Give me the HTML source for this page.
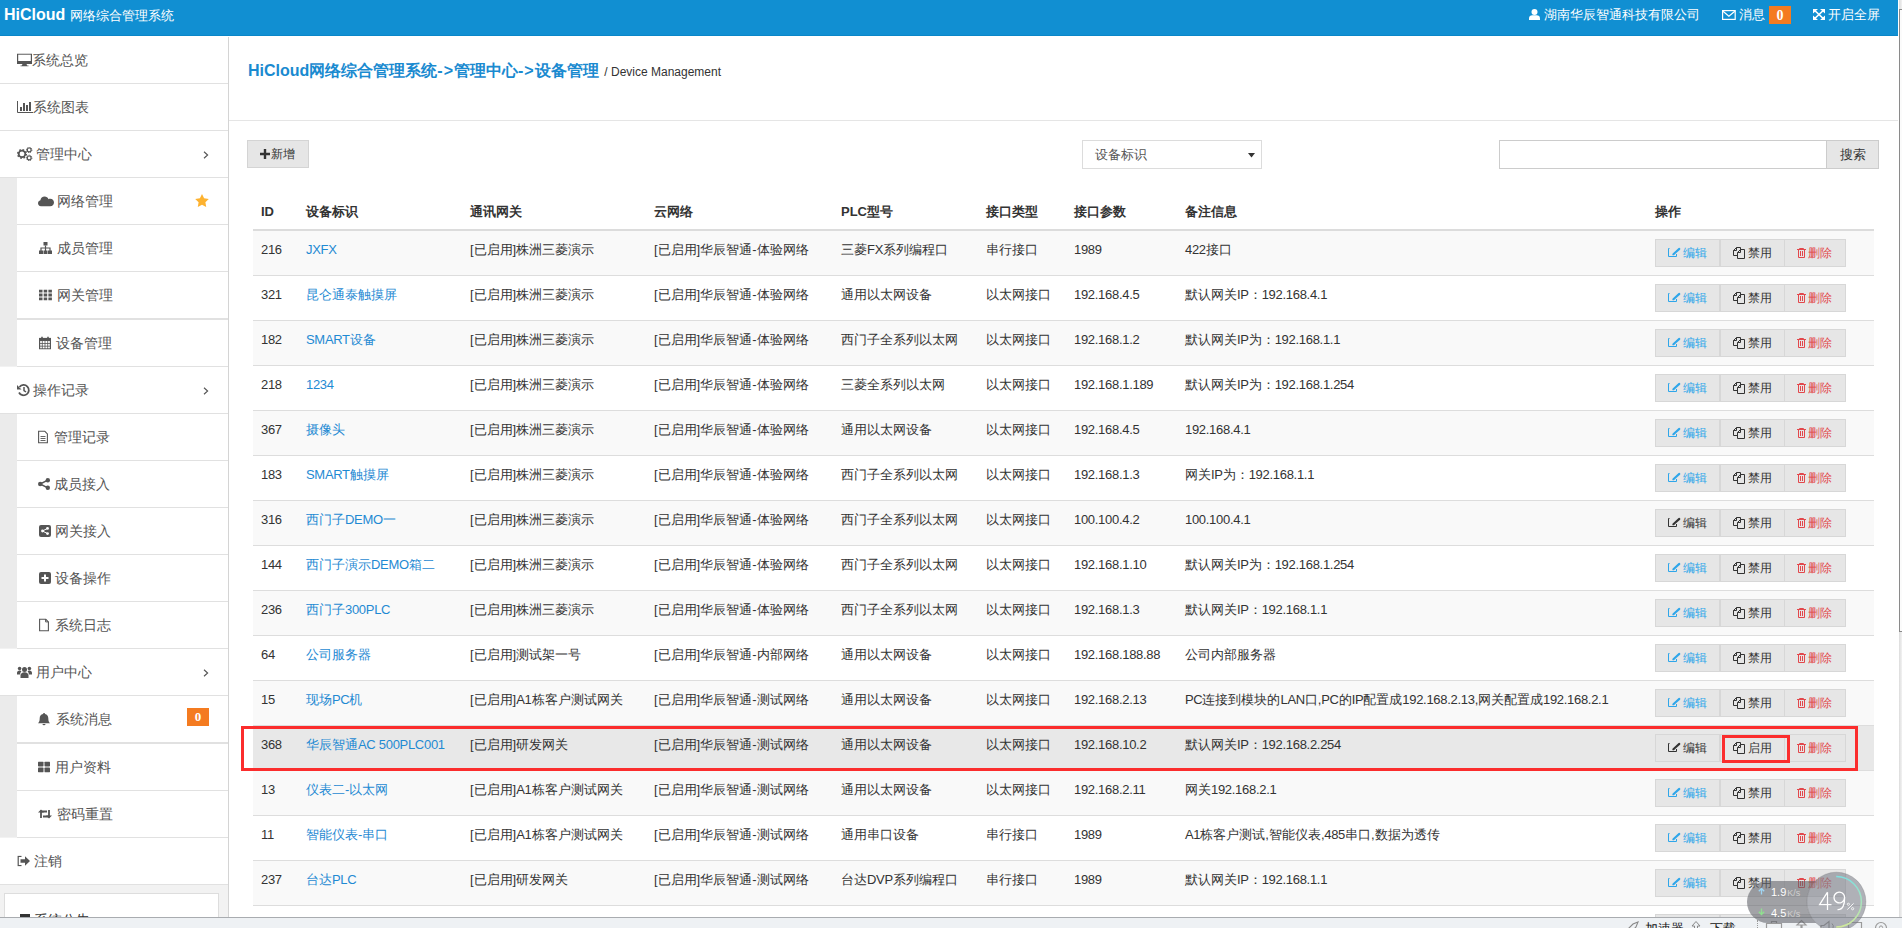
<!DOCTYPE html>
<html><head><meta charset="utf-8">
<style>
*{margin:0;padding:0;box-sizing:border-box}
html,body{width:1902px;height:928px;overflow:hidden;background:#fff;font-family:"Liberation Sans",sans-serif;font-size:13px;color:#333}
svg{display:inline-block;vertical-align:middle}
#hdr{position:absolute;left:0;top:0;width:1898px;height:36px;background:#118fd2;border-bottom:1px solid #0a86c8;color:#fff}
#logo{position:absolute;left:4px;top:5px;font-size:16px;line-height:20px;font-weight:bold;white-space:nowrap}
#logo span{font-weight:normal;font-size:13px}
.hi{position:absolute;top:0;height:36px;line-height:29px;font-size:13px;white-space:nowrap}
.hbadge{position:absolute;left:1769px;top:6px;width:22px;height:18px;background:#f47b20;color:#fff;font-family:"Liberation Serif",serif;font-weight:bold;font-size:14px;line-height:19px;text-align:center}
#sbbg{position:absolute;left:0;top:37px;width:229px;height:880px;background:#f2f2f2;border-right:1px solid #d4d4d4}
.mi{position:absolute;background:#fff;border-bottom:1px solid #e1e1e1;font-size:14px;color:#555}
.mgray{position:absolute;left:0;width:17px;background:#ebebeb}
.mic{position:absolute;top:50%;transform:translateY(-50%);line-height:0}
.mt{position:absolute;top:13px;line-height:20px;white-space:nowrap}
.chev{position:absolute;left:203px;top:20px;line-height:0}
.star{position:absolute;left:178px;top:16px;line-height:0}
.sbadge{position:absolute;left:170px;top:12px;width:22px;height:18px;background:#f47b20;color:#fff;font-family:"Liberation Serif",serif;font-weight:bold;font-size:13px;line-height:17px;text-align:center}
#notice{position:absolute;left:4px;top:893px;width:215px;height:40px;background:#fff;border:1px solid #ddd}
#main{position:absolute;left:229px;top:37px;width:1669px;height:880px;background:#fff}
#title{position:absolute;left:248px;top:60px;white-space:nowrap;line-height:22px}
#title b{font-size:16px;color:#1a8ad0}
#title i{font-style:normal;letter-spacing:1px}
#title small{font-size:12px;color:#333;font-weight:normal;margin-left:2px}
#tline{position:absolute;left:229px;top:120px;width:1669px;height:1px;background:#e5e5e5}
.btn{position:absolute;background:#e6e6e6;border:1px solid #d4d4d4;color:#333;font-size:13px;white-space:nowrap}
#sel{position:absolute;left:1082px;top:140px;width:180px;height:29px;border:1px solid #dcdcdc;background:#fff;font-size:13px;color:#555}
#srch{position:absolute;left:1499px;top:140px;width:328px;height:29px;border:1px solid #ccc;background:#fff}
table{position:absolute;left:253px;top:192px;width:1621px;border-collapse:collapse;table-layout:fixed}
th{font-weight:bold;text-align:left;height:38px;padding:2px 8px 0 8px;border-bottom:2px solid #dcdcdc;font-size:13px;color:#333;vertical-align:middle;white-space:nowrap}
td{height:45px;padding:0 8px 6px 8px;border-bottom:1px solid #dddddd;font-size:13px;color:#333;vertical-align:middle;white-space:nowrap}
tr.st td{background:#f9f9f9}
tr.hv td{background:#e8e8e8}
td.lk{color:#1f8ad3}
td.op{padding:0 8px}
.l{letter-spacing:-0.3px}
.bg{position:relative;height:28px;width:190px;margin-left:0}
.bt{position:absolute;top:0;height:28px;background:#e6e6e6;border:1px solid #d7d7d7;font-size:12px;line-height:26px;color:#333;white-space:nowrap;padding-left:12px}
.bt svg.bi{position:absolute}
.bt i{position:absolute;top:0;font-style:normal;line-height:26px}
.b1{left:0;width:65px}
.b2{left:65px;width:65px}
.b3{left:129px;width:62px;color:#e2474b}
#scroll{position:absolute;left:1899px;top:0;width:3px;height:917px;background:linear-gradient(90deg,#dcdcdc,#f2f2f2)}
#thumb{position:absolute;left:1899px;top:9px;width:3px;height:623px;border-left:1px solid #8a8a8a;border-top:1px solid #8a8a8a;border-bottom:1px solid #8a8a8a;background:#fbfbfb}
#status{position:absolute;left:0;top:917px;width:1902px;height:11px;background:#eef1f4;border-top:1px solid #a9acb0}
#pill{position:absolute;left:1747px;top:881px;width:90px;height:42px;border-radius:21px;background:rgba(100,102,108,0.6)}
#circ{position:absolute;left:1807px;top:872px;width:59px;height:59px;border-radius:30px;background:rgba(125,128,138,0.6);box-shadow:inset 0 0 0 1px rgba(90,90,95,0.25)}
#redbox{position:absolute;left:241px;top:726px;width:1617px;height:45px;border:3px solid #fb2d2d}
#redbox2{position:absolute;left:1722px;top:735px;width:68px;height:28px;border:3px solid #fb2d2d}
</style></head><body>
<div id="hdr"></div>
<div id="logo" style="color:#fff">HiCloud <span>网络综合管理系统</span></div>
<div class="hi" style="left:1529px;color:#fff"><svg width="11" height="11" viewBox="0 0 11 11" style="vertical-align:-1px"><circle cx="5.5" cy="3" r="3" fill="#fff"/><path d="M0 11V9.5C0 7.5 1.5 6.3 3.2 6.3h4.6C9.5 6.3 11 7.5 11 9.5V11z" fill="#fff"/></svg> 湖南华辰智通科技有限公司</div>
<div class="hi" style="left:1722px;color:#fff"><svg width="14" height="10" viewBox="0 0 14 10" style="position:absolute;left:0;top:10px"><rect x="0.6" y="0.6" width="12.6" height="8.8" fill="none" stroke="#fff" stroke-width="1.2"/><path d="M1 1.3L6.9 6.3 12.8 1.3" fill="none" stroke="#fff" stroke-width="1.2"/></svg><span style="position:absolute;left:17px;top:0">消息</span></div>
<div class="hbadge">0</div>
<div class="hi" style="left:1813px;color:#fff"><svg width="12" height="11" viewBox="0 0 12 11" style="position:absolute;left:0;top:9px"><path d="M0 0H5L0 4.5Z M12 0H7L12 4.5Z M0 11H5L0 6.5Z M12 11H7L12 6.5Z" fill="#fff"/><path d="M1.2 1L10.8 10M10.8 1L1.2 10" stroke="#fff" stroke-width="1.7"/></svg><span style="position:absolute;left:15px;top:0">开启全屏</span></div>
<div id="sbbg"></div><div class="mgray" style="top:178px;height:188px"></div><div class="mgray" style="top:414px;height:234px"></div><div class="mgray" style="top:696px;height:141px"></div>
<div class="mi" style="top:37px;left:0px;width:228px;height:47px;border-bottom-width:1px"><span class="mic" style="left:17px"><svg class="ic" width="15" height="13" viewBox="0 0 15 13" style=""><rect x="0.6" y="0.6" width="13.8" height="9.3" fill="none" stroke="#555" stroke-width="1.2"/><rect x="0" y="7.5" width="15" height="2.7" fill="#555"/><path d="M5.5 10h4l0.5 2h1.5v1h-8v-1h1.5z" fill="#555"/></svg></span><span class="mt" style="left:32px">系统总览</span></div>
<div class="mi" style="top:84px;left:0px;width:228px;height:47px;border-bottom-width:1px"><span class="mic" style="left:17px"><svg class="ic" width="16" height="12" viewBox="0 0 16 12" style=""><path d="M0.5 0V11.5H16" fill="none" stroke="#555" stroke-width="1"/><rect x="3" y="6" width="2" height="4" fill="#555"/><rect x="6" y="2" width="2" height="8" fill="#555"/><rect x="9" y="4" width="2" height="6" fill="#555"/><rect x="12" y="1" width="2" height="9" fill="#555"/></svg></span><span class="mt" style="left:33px">系统图表</span></div>
<div class="mi" style="top:131px;left:0px;width:228px;height:47px;border-bottom-width:1px"><span class="mic" style="left:17px"><svg class="ic" width="16" height="14" viewBox="0 0 16 14" style=""><circle cx="5" cy="6.9" r="3.3" fill="none" stroke="#555" stroke-width="1.8"/><circle cx="5" cy="6.9" r="4.4" fill="none" stroke="#555" stroke-width="1.3" stroke-dasharray="1.7 1.75"/><circle cx="12.2" cy="2.9" r="1.9" fill="none" stroke="#555" stroke-width="1.2"/><circle cx="12.2" cy="2.9" r="2.7" fill="none" stroke="#555" stroke-width="1" stroke-dasharray="1.1 1.0"/><circle cx="12.2" cy="10.9" r="1.9" fill="none" stroke="#555" stroke-width="1.2"/><circle cx="12.2" cy="10.9" r="2.7" fill="none" stroke="#555" stroke-width="1" stroke-dasharray="1.1 1.0"/></svg></span><span class="mt" style="left:36px">管理中心</span><span class="chev"><svg class="ic" width="6" height="8" viewBox="0 0 6 8" style=""><path d="M1 0.8l3.6 3.2-3.6 3.2" fill="none" stroke="#555" stroke-width="1.15"/></svg></span></div>
<div class="mi" style="top:178px;left:17px;width:211px;height:47px;border-bottom-width:1px"><span class="mic" style="left:21px"><svg class="ic" width="16" height="11" viewBox="0 0 16 11" style=""><path d="M3.5 11C1.5 11 0 9.6 0 7.8 0 6.3 1 5.1 2.4 4.8 2.6 2.7 4.4 1 6.6 1c1.8 0 3.3 1.1 3.9 2.7C11 3.4 11.6 3.3 12.2 3.3c2.1 0 3.8 1.7 3.8 3.8S14.3 11 12.2 11z" fill="#555"/></svg></span><span class="mt" style="left:40px">网络管理</span><span class="star"><svg class="ic" width="14" height="13" viewBox="0 0 14 13" style=""><path d="M7 0l2.1 4.3 4.7 0.7-3.4 3.3 0.8 4.7L7 10.8 2.8 13l0.8-4.7L0.2 5l4.7-0.7z" fill="#fdb230"/></svg></span></div>
<div class="mi" style="top:225px;left:17px;width:211px;height:47px;border-bottom-width:1px"><span class="mic" style="left:22px"><svg class="ic" width="13" height="12" viewBox="0 0 13 12" style=""><rect x="4.5" y="0" width="4" height="3.5" fill="#555"/><path d="M6.5 3.5v2.5M2 9V6h9v3M6.5 6v3" fill="none" stroke="#555" stroke-width="1.2"/><rect x="0" y="8.5" width="4" height="3.5" fill="#555"/><rect x="4.5" y="8.5" width="4" height="3.5" fill="#555"/><rect x="9" y="8.5" width="4" height="3.5" fill="#555"/></svg></span><span class="mt" style="left:40px">成员管理</span></div>
<div class="mi" style="top:272px;left:17px;width:211px;height:48px;border-bottom-width:2px"><span class="mic" style="left:22px"><svg class="ic" width="13" height="11" viewBox="0 0 13 11" style=""><rect x="0" y="0" width="3.5" height="3" fill="#555"/><rect x="0" y="4" width="3.5" height="3" fill="#555"/><rect x="0" y="8" width="3.5" height="3" fill="#555"/><rect x="4.7" y="0" width="3.5" height="3" fill="#555"/><rect x="4.7" y="4" width="3.5" height="3" fill="#555"/><rect x="4.7" y="8" width="3.5" height="3" fill="#555"/><rect x="9.4" y="0" width="3.5" height="3" fill="#555"/><rect x="9.4" y="4" width="3.5" height="3" fill="#555"/><rect x="9.4" y="8" width="3.5" height="3" fill="#555"/></svg></span><span class="mt" style="left:40px">网关管理</span></div>
<div class="mi" style="top:320px;left:17px;width:211px;height:47px;border-bottom-width:1px"><span class="mic" style="left:22px"><svg class="ic" width="12" height="13" viewBox="0 0 12 13" style=""><rect x="0.6" y="2" width="10.8" height="10.4" fill="none" stroke="#555" stroke-width="1.2"/><rect x="0.6" y="2" width="10.8" height="2.5" fill="#555"/><path d="M3 0v3M9 0v3" stroke="#555" stroke-width="1.6"/><path d="M0.6 7h10.8M0.6 9.7h10.8M3.3 4.5v8M6 4.5v8M8.7 4.5v8" stroke="#555" stroke-width="0.8"/></svg></span><span class="mt" style="left:39px">设备管理</span></div>
<div class="mi" style="top:367px;left:0px;width:228px;height:47px;border-bottom-width:1px"><span class="mic" style="left:17px"><svg class="ic" width="13" height="13" viewBox="0 0 13 13" style=""><path d="M2.5 3.5A5.2 5.2 0 1 1 2 9" fill="none" stroke="#555" stroke-width="1.8"/><path d="M0 1.5l0 4.5 4.5 0z" fill="#555"/><path d="M7 3.5v3.5l2 1.5" fill="none" stroke="#555" stroke-width="1.5"/></svg></span><span class="mt" style="left:33px">操作记录</span><span class="chev"><svg class="ic" width="6" height="8" viewBox="0 0 6 8" style=""><path d="M1 0.8l3.6 3.2-3.6 3.2" fill="none" stroke="#555" stroke-width="1.15"/></svg></span></div>
<div class="mi" style="top:414px;left:17px;width:211px;height:47px;border-bottom-width:1px"><span class="mic" style="left:21px"><svg class="ic" width="10" height="13" viewBox="0 0 10 13" style=""><path d="M0.6 0.6h6l2.8 2.8v9H0.6z" fill="none" stroke="#555" stroke-width="1.1"/><path d="M2.5 6h5M2.5 8h5M2.5 10h5" stroke="#555" stroke-width="0.9"/></svg></span><span class="mt" style="left:37px">管理记录</span></div>
<div class="mi" style="top:461px;left:17px;width:211px;height:47px;border-bottom-width:1px"><span class="mic" style="left:21px"><svg class="ic" width="12" height="12" viewBox="0 0 12 12" style=""><circle cx="2.2" cy="6" r="2.2" fill="#555"/><circle cx="9.8" cy="2.2" r="2.2" fill="#555"/><circle cx="9.8" cy="9.8" r="2.2" fill="#555"/><path d="M2.2 6L9.8 2.2M2.2 6l7.6 3.8" stroke="#555" stroke-width="1.4"/></svg></span><span class="mt" style="left:37px">成员接入</span></div>
<div class="mi" style="top:508px;left:17px;width:211px;height:47px;border-bottom-width:1px"><span class="mic" style="left:22px"><svg class="ic" width="12" height="12" viewBox="0 0 12 12" style=""><rect x="0" y="0" width="12" height="12" rx="2" fill="#555"/><circle cx="3.5" cy="6" r="1.4" fill="#fff"/><circle cx="8.5" cy="3.4" r="1.4" fill="#fff"/><circle cx="8.5" cy="8.6" r="1.4" fill="#fff"/><path d="M3.5 6l5-2.6M3.5 6l5 2.6" stroke="#fff" stroke-width="1"/></svg></span><span class="mt" style="left:38px">网关接入</span></div>
<div class="mi" style="top:555px;left:17px;width:211px;height:47px;border-bottom-width:1px"><span class="mic" style="left:22px"><svg class="ic" width="12" height="12" viewBox="0 0 12 12" style=""><rect x="0" y="0" width="12" height="12" rx="2" fill="#555"/><path d="M6 2.5v7M2.5 6h7" stroke="#fff" stroke-width="2"/></svg></span><span class="mt" style="left:38px">设备操作</span></div>
<div class="mi" style="top:602px;left:17px;width:211px;height:47px;border-bottom-width:1px"><span class="mic" style="left:22px"><svg class="ic" width="10" height="13" viewBox="0 0 10 13" style=""><path d="M0.6 0.6h6l2.8 2.8v9H0.6z" fill="none" stroke="#555" stroke-width="1.1"/><path d="M6.6 0.6v2.8h2.8" fill="none" stroke="#555" stroke-width="1"/></svg></span><span class="mt" style="left:38px">系统日志</span></div>
<div class="mi" style="top:649px;left:0px;width:228px;height:47px;border-bottom-width:1px"><span class="mic" style="left:17px"><svg class="ic" width="15" height="12" viewBox="0 0 15 12" style=""><circle cx="7.5" cy="3.5" r="2.5" fill="#555"/><path d="M3.5 12v-2.5c0-2 1.5-3.3 4-3.3s4 1.3 4 3.3V12z" fill="#555"/><circle cx="2.6" cy="2.5" r="1.8" fill="#555"/><circle cx="12.4" cy="2.5" r="1.8" fill="#555"/><path d="M0 8.5V7c0-1.5 1-2.5 2.6-2.5 1 0 1.5 0.4 1.8 0.8-0.8 0.8-1.2 1.8-1.2 3.2z M15 8.5V7c0-1.5-1-2.5-2.6-2.5-1 0-1.5 0.4-1.8 0.8 0.8 0.8 1.2 1.8 1.2 3.2z" fill="#555"/></svg></span><span class="mt" style="left:36px">用户中心</span><span class="chev"><svg class="ic" width="6" height="8" viewBox="0 0 6 8" style=""><path d="M1 0.8l3.6 3.2-3.6 3.2" fill="none" stroke="#555" stroke-width="1.15"/></svg></span></div>
<div class="mi" style="top:696px;left:17px;width:211px;height:48px;border-bottom-width:2px"><span class="mic" style="left:21px"><svg class="ic" width="12" height="13" viewBox="0 0 12 13" style=""><path d="M6 0.5c0.6 0 1 0.4 1 0.9 2.2 0.4 3.3 2.2 3.3 4.3 0 3 0.8 4.2 1.7 5H0c0.9-0.8 1.7-2 1.7-5 0-2.1 1.1-3.9 3.3-4.3 0-0.5 0.4-0.9 1-0.9z M4.5 11.6h3c0 0.8-0.7 1.4-1.5 1.4s-1.5-0.6-1.5-1.4z" fill="#555"/></svg></span><span class="mt" style="left:39px">系统消息</span><span class="sbadge">0</span></div>
<div class="mi" style="top:744px;left:17px;width:211px;height:47px;border-bottom-width:1px"><span class="mic" style="left:21px"><svg class="ic" width="12" height="11" viewBox="0 0 12 11" style=""><rect x="0" y="0" width="5.5" height="5" rx="0.8" fill="#555"/><rect x="6.5" y="0" width="5.5" height="5" rx="0.8" fill="#555"/><rect x="0" y="6" width="5.5" height="5" rx="0.8" fill="#555"/><rect x="6.5" y="6" width="5.5" height="5" rx="0.8" fill="#555"/></svg></span><span class="mt" style="left:38px">用户资料</span></div>
<div class="mi" style="top:791px;left:17px;width:211px;height:47px;border-bottom-width:1px"><span class="mic" style="left:21px"><svg class="ic" width="14" height="10" viewBox="0 0 14 10" style=""><path d="M3 9V2.5h6" fill="none" stroke="#555" stroke-width="1.8"/><path d="M0 3.5L3 0.5 6 3.5z" fill="#555"/><path d="M11 1v6.5H5" fill="none" stroke="#555" stroke-width="1.8"/><path d="M8 6.5l3 3 3-3z" fill="#555"/></svg></span><span class="mt" style="left:40px">密码重置</span></div>
<div class="mi" style="top:838px;left:0px;width:228px;height:47px;border-bottom-width:1px"><span class="mic" style="left:17px"><svg class="ic" width="13" height="11" viewBox="0 0 13 11" style=""><path d="M4.5 0.8H1.2v9.4h3.3" fill="none" stroke="#555" stroke-width="1.2"/><path d="M3.5 3.8h4.5V0.8L13 5.5 8 10.2V7.2H3.5z" fill="#555"/></svg></span><span class="mt" style="left:34px">注销</span></div>
<div id="notice"></div>
<div style="position:absolute;left:20px;top:914px;width:10px;height:3px;background:#333;overflow:hidden"></div>
<div style="position:absolute;left:34px;top:910px;height:7px;overflow:hidden;font-size:14px;line-height:20px;color:#333;white-space:nowrap">系统公告</div>
<div id="main"></div>
<div id="title"><b>HiCloud网络综合管理系统<i>-&gt;</i>管理中心<i>-&gt;</i>设备管理</b> <small>/ Device Management</small></div>
<div id="tline"></div>
<div class="btn" style="left:247px;top:140px;width:62px;height:28px"><svg width="10" height="10" viewBox="0 0 10 10" style="position:absolute;left:12px;top:8px"><path d="M5 0v10M0 5h10" stroke="#333" stroke-width="2.4"/></svg><span style="position:absolute;left:23px;top:0;font-size:12px;line-height:26px">新增</span></div>
<div id="sel"><span style="position:absolute;left:12px;top:5px;line-height:18px">设备标识</span><svg width="7" height="5" viewBox="0 0 7 5" style="position:absolute;left:165px;top:12px"><path d="M0 0h7L3.5 4.5z" fill="#333"/></svg></div>
<div id="srch"></div>
<div class="btn" style="left:1826px;top:140px;width:53px;height:29px;border-color:#ccc;line-height:27px;text-align:center;color:#333">搜索</div>
<table>
<colgroup><col style="width:45px"><col style="width:164px"><col style="width:184px"><col style="width:187px"><col style="width:145px"><col style="width:88px"><col style="width:111px"><col style="width:470px"><col style="width:227px"></colgroup>
<thead><tr><th>ID</th><th>设备标识</th><th>通讯网关</th><th>云网络</th><th>PLC型号</th><th>接口类型</th><th>接口参数</th><th>备注信息</th><th>操作</th></tr></thead>
<tbody>
<tr class="st"><td><span class="l">216</span></td><td class="lk"><span class="l">JXFX</span></td><td>[已启用]株洲三菱演示</td><td>[已启用]华辰智通-体验网络</td><td>三菱<span class="l">FX</span>系列编程口</td><td>串行接口</td><td><span class="l">1989</span></td><td><span class="l">422</span>接口</td><td class="op"><div class="bg"><span class="bt b1" style="color:#2ea6ea"><svg class="bi" width="18" height="18" viewBox="0 0 18 18" style="left:9px;top:3px"><path d="M4.5 5.5H3.5V13.5H11.5V11" fill="none" stroke="#2ea6ea" stroke-width="1"/><path d="M8.4 11.2L14.3 5.9" fill="none" stroke="#2ea6ea" stroke-width="2.1" stroke-linecap="round"/><path d="M7.6 12.2L8.2 10.4 9.5 11.6Z" fill="#2ea6ea"/></svg><i style="left:27px">编辑</i></span><span class="bt b2"><svg class="bi" width="18" height="18" viewBox="0 0 18 18" style="left:9px;top:3px"><path d="M6.5 4.5H10.5V12.5H3.5V7.5Z M3.5 7.5H6.5V4.5" fill="none" stroke="#333" stroke-width="1"/><path d="M10.5 6.5H14.5V15.5H7.5V9.5Z" fill="#e6e6e6" stroke="#333" stroke-width="1"/><path d="M7.5 9.5H10.5V6.5" fill="none" stroke="#333" stroke-width="1"/></svg><i style="left:27px">禁用</i></span><span class="bt b3"><svg class="bi" width="18" height="18" viewBox="0 0 18 18" style="left:8px;top:3px"><path d="M4 6.5H13" fill="none" stroke="#e2474b" stroke-width="1"/><path d="M6.5 6V5.5H10.5V6" fill="none" stroke="#e2474b" stroke-width="1"/><path d="M5.5 6.5V14.5H11.5V6.5" fill="none" stroke="#e2474b" stroke-width="1"/><path d="M7.5 8V13M9.5 8V13" fill="none" stroke="#e2474b" stroke-width="1"/></svg><i style="left:23px">删除</i></span></div></td></tr>
<tr class=""><td><span class="l">321</span></td><td class="lk">昆仑通泰触摸屏</td><td>[已启用]株洲三菱演示</td><td>[已启用]华辰智通-体验网络</td><td>通用以太网设备</td><td>以太网接口</td><td><span class="l">192.168.4.5</span></td><td>默认网关<span class="l">IP</span>：<span class="l">192.168.4.1</span></td><td class="op"><div class="bg"><span class="bt b1" style="color:#2ea6ea"><svg class="bi" width="18" height="18" viewBox="0 0 18 18" style="left:9px;top:3px"><path d="M4.5 5.5H3.5V13.5H11.5V11" fill="none" stroke="#2ea6ea" stroke-width="1"/><path d="M8.4 11.2L14.3 5.9" fill="none" stroke="#2ea6ea" stroke-width="2.1" stroke-linecap="round"/><path d="M7.6 12.2L8.2 10.4 9.5 11.6Z" fill="#2ea6ea"/></svg><i style="left:27px">编辑</i></span><span class="bt b2"><svg class="bi" width="18" height="18" viewBox="0 0 18 18" style="left:9px;top:3px"><path d="M6.5 4.5H10.5V12.5H3.5V7.5Z M3.5 7.5H6.5V4.5" fill="none" stroke="#333" stroke-width="1"/><path d="M10.5 6.5H14.5V15.5H7.5V9.5Z" fill="#e6e6e6" stroke="#333" stroke-width="1"/><path d="M7.5 9.5H10.5V6.5" fill="none" stroke="#333" stroke-width="1"/></svg><i style="left:27px">禁用</i></span><span class="bt b3"><svg class="bi" width="18" height="18" viewBox="0 0 18 18" style="left:8px;top:3px"><path d="M4 6.5H13" fill="none" stroke="#e2474b" stroke-width="1"/><path d="M6.5 6V5.5H10.5V6" fill="none" stroke="#e2474b" stroke-width="1"/><path d="M5.5 6.5V14.5H11.5V6.5" fill="none" stroke="#e2474b" stroke-width="1"/><path d="M7.5 8V13M9.5 8V13" fill="none" stroke="#e2474b" stroke-width="1"/></svg><i style="left:23px">删除</i></span></div></td></tr>
<tr class="st"><td><span class="l">182</span></td><td class="lk"><span class="l">SMART</span>设备</td><td>[已启用]株洲三菱演示</td><td>[已启用]华辰智通-体验网络</td><td>西门子全系列以太网</td><td>以太网接口</td><td><span class="l">192.168.1.2</span></td><td>默认网关<span class="l">IP</span>为：<span class="l">192.168.1.1</span></td><td class="op"><div class="bg"><span class="bt b1" style="color:#2ea6ea"><svg class="bi" width="18" height="18" viewBox="0 0 18 18" style="left:9px;top:3px"><path d="M4.5 5.5H3.5V13.5H11.5V11" fill="none" stroke="#2ea6ea" stroke-width="1"/><path d="M8.4 11.2L14.3 5.9" fill="none" stroke="#2ea6ea" stroke-width="2.1" stroke-linecap="round"/><path d="M7.6 12.2L8.2 10.4 9.5 11.6Z" fill="#2ea6ea"/></svg><i style="left:27px">编辑</i></span><span class="bt b2"><svg class="bi" width="18" height="18" viewBox="0 0 18 18" style="left:9px;top:3px"><path d="M6.5 4.5H10.5V12.5H3.5V7.5Z M3.5 7.5H6.5V4.5" fill="none" stroke="#333" stroke-width="1"/><path d="M10.5 6.5H14.5V15.5H7.5V9.5Z" fill="#e6e6e6" stroke="#333" stroke-width="1"/><path d="M7.5 9.5H10.5V6.5" fill="none" stroke="#333" stroke-width="1"/></svg><i style="left:27px">禁用</i></span><span class="bt b3"><svg class="bi" width="18" height="18" viewBox="0 0 18 18" style="left:8px;top:3px"><path d="M4 6.5H13" fill="none" stroke="#e2474b" stroke-width="1"/><path d="M6.5 6V5.5H10.5V6" fill="none" stroke="#e2474b" stroke-width="1"/><path d="M5.5 6.5V14.5H11.5V6.5" fill="none" stroke="#e2474b" stroke-width="1"/><path d="M7.5 8V13M9.5 8V13" fill="none" stroke="#e2474b" stroke-width="1"/></svg><i style="left:23px">删除</i></span></div></td></tr>
<tr class=""><td><span class="l">218</span></td><td class="lk"><span class="l">1234</span></td><td>[已启用]株洲三菱演示</td><td>[已启用]华辰智通-体验网络</td><td>三菱全系列以太网</td><td>以太网接口</td><td><span class="l">192.168.1.189</span></td><td>默认网关<span class="l">IP</span>为：<span class="l">192.168.1.254</span></td><td class="op"><div class="bg"><span class="bt b1" style="color:#2ea6ea"><svg class="bi" width="18" height="18" viewBox="0 0 18 18" style="left:9px;top:3px"><path d="M4.5 5.5H3.5V13.5H11.5V11" fill="none" stroke="#2ea6ea" stroke-width="1"/><path d="M8.4 11.2L14.3 5.9" fill="none" stroke="#2ea6ea" stroke-width="2.1" stroke-linecap="round"/><path d="M7.6 12.2L8.2 10.4 9.5 11.6Z" fill="#2ea6ea"/></svg><i style="left:27px">编辑</i></span><span class="bt b2"><svg class="bi" width="18" height="18" viewBox="0 0 18 18" style="left:9px;top:3px"><path d="M6.5 4.5H10.5V12.5H3.5V7.5Z M3.5 7.5H6.5V4.5" fill="none" stroke="#333" stroke-width="1"/><path d="M10.5 6.5H14.5V15.5H7.5V9.5Z" fill="#e6e6e6" stroke="#333" stroke-width="1"/><path d="M7.5 9.5H10.5V6.5" fill="none" stroke="#333" stroke-width="1"/></svg><i style="left:27px">禁用</i></span><span class="bt b3"><svg class="bi" width="18" height="18" viewBox="0 0 18 18" style="left:8px;top:3px"><path d="M4 6.5H13" fill="none" stroke="#e2474b" stroke-width="1"/><path d="M6.5 6V5.5H10.5V6" fill="none" stroke="#e2474b" stroke-width="1"/><path d="M5.5 6.5V14.5H11.5V6.5" fill="none" stroke="#e2474b" stroke-width="1"/><path d="M7.5 8V13M9.5 8V13" fill="none" stroke="#e2474b" stroke-width="1"/></svg><i style="left:23px">删除</i></span></div></td></tr>
<tr class="st"><td><span class="l">367</span></td><td class="lk">摄像头</td><td>[已启用]株洲三菱演示</td><td>[已启用]华辰智通-体验网络</td><td>通用以太网设备</td><td>以太网接口</td><td><span class="l">192.168.4.5</span></td><td><span class="l">192.168.4.1</span></td><td class="op"><div class="bg"><span class="bt b1" style="color:#2ea6ea"><svg class="bi" width="18" height="18" viewBox="0 0 18 18" style="left:9px;top:3px"><path d="M4.5 5.5H3.5V13.5H11.5V11" fill="none" stroke="#2ea6ea" stroke-width="1"/><path d="M8.4 11.2L14.3 5.9" fill="none" stroke="#2ea6ea" stroke-width="2.1" stroke-linecap="round"/><path d="M7.6 12.2L8.2 10.4 9.5 11.6Z" fill="#2ea6ea"/></svg><i style="left:27px">编辑</i></span><span class="bt b2"><svg class="bi" width="18" height="18" viewBox="0 0 18 18" style="left:9px;top:3px"><path d="M6.5 4.5H10.5V12.5H3.5V7.5Z M3.5 7.5H6.5V4.5" fill="none" stroke="#333" stroke-width="1"/><path d="M10.5 6.5H14.5V15.5H7.5V9.5Z" fill="#e6e6e6" stroke="#333" stroke-width="1"/><path d="M7.5 9.5H10.5V6.5" fill="none" stroke="#333" stroke-width="1"/></svg><i style="left:27px">禁用</i></span><span class="bt b3"><svg class="bi" width="18" height="18" viewBox="0 0 18 18" style="left:8px;top:3px"><path d="M4 6.5H13" fill="none" stroke="#e2474b" stroke-width="1"/><path d="M6.5 6V5.5H10.5V6" fill="none" stroke="#e2474b" stroke-width="1"/><path d="M5.5 6.5V14.5H11.5V6.5" fill="none" stroke="#e2474b" stroke-width="1"/><path d="M7.5 8V13M9.5 8V13" fill="none" stroke="#e2474b" stroke-width="1"/></svg><i style="left:23px">删除</i></span></div></td></tr>
<tr class=""><td><span class="l">183</span></td><td class="lk"><span class="l">SMART</span>触摸屏</td><td>[已启用]株洲三菱演示</td><td>[已启用]华辰智通-体验网络</td><td>西门子全系列以太网</td><td>以太网接口</td><td><span class="l">192.168.1.3</span></td><td>网关<span class="l">IP</span>为：<span class="l">192.168.1.1</span></td><td class="op"><div class="bg"><span class="bt b1" style="color:#2ea6ea"><svg class="bi" width="18" height="18" viewBox="0 0 18 18" style="left:9px;top:3px"><path d="M4.5 5.5H3.5V13.5H11.5V11" fill="none" stroke="#2ea6ea" stroke-width="1"/><path d="M8.4 11.2L14.3 5.9" fill="none" stroke="#2ea6ea" stroke-width="2.1" stroke-linecap="round"/><path d="M7.6 12.2L8.2 10.4 9.5 11.6Z" fill="#2ea6ea"/></svg><i style="left:27px">编辑</i></span><span class="bt b2"><svg class="bi" width="18" height="18" viewBox="0 0 18 18" style="left:9px;top:3px"><path d="M6.5 4.5H10.5V12.5H3.5V7.5Z M3.5 7.5H6.5V4.5" fill="none" stroke="#333" stroke-width="1"/><path d="M10.5 6.5H14.5V15.5H7.5V9.5Z" fill="#e6e6e6" stroke="#333" stroke-width="1"/><path d="M7.5 9.5H10.5V6.5" fill="none" stroke="#333" stroke-width="1"/></svg><i style="left:27px">禁用</i></span><span class="bt b3"><svg class="bi" width="18" height="18" viewBox="0 0 18 18" style="left:8px;top:3px"><path d="M4 6.5H13" fill="none" stroke="#e2474b" stroke-width="1"/><path d="M6.5 6V5.5H10.5V6" fill="none" stroke="#e2474b" stroke-width="1"/><path d="M5.5 6.5V14.5H11.5V6.5" fill="none" stroke="#e2474b" stroke-width="1"/><path d="M7.5 8V13M9.5 8V13" fill="none" stroke="#e2474b" stroke-width="1"/></svg><i style="left:23px">删除</i></span></div></td></tr>
<tr class="st"><td><span class="l">316</span></td><td class="lk">西门子<span class="l">DEMO</span>一</td><td>[已启用]株洲三菱演示</td><td>[已启用]华辰智通-体验网络</td><td>西门子全系列以太网</td><td>以太网接口</td><td><span class="l">100.100.4.2</span></td><td><span class="l">100.100.4.1</span></td><td class="op"><div class="bg"><span class="bt b1" style="color:#333"><svg class="bi" width="18" height="18" viewBox="0 0 18 18" style="left:9px;top:3px"><path d="M4.5 5.5H3.5V13.5H11.5V11" fill="none" stroke="#333" stroke-width="1"/><path d="M8.4 11.2L14.3 5.9" fill="none" stroke="#333" stroke-width="2.1" stroke-linecap="round"/><path d="M7.6 12.2L8.2 10.4 9.5 11.6Z" fill="#333"/></svg><i style="left:27px">编辑</i></span><span class="bt b2"><svg class="bi" width="18" height="18" viewBox="0 0 18 18" style="left:9px;top:3px"><path d="M6.5 4.5H10.5V12.5H3.5V7.5Z M3.5 7.5H6.5V4.5" fill="none" stroke="#333" stroke-width="1"/><path d="M10.5 6.5H14.5V15.5H7.5V9.5Z" fill="#e6e6e6" stroke="#333" stroke-width="1"/><path d="M7.5 9.5H10.5V6.5" fill="none" stroke="#333" stroke-width="1"/></svg><i style="left:27px">禁用</i></span><span class="bt b3"><svg class="bi" width="18" height="18" viewBox="0 0 18 18" style="left:8px;top:3px"><path d="M4 6.5H13" fill="none" stroke="#e2474b" stroke-width="1"/><path d="M6.5 6V5.5H10.5V6" fill="none" stroke="#e2474b" stroke-width="1"/><path d="M5.5 6.5V14.5H11.5V6.5" fill="none" stroke="#e2474b" stroke-width="1"/><path d="M7.5 8V13M9.5 8V13" fill="none" stroke="#e2474b" stroke-width="1"/></svg><i style="left:23px">删除</i></span></div></td></tr>
<tr class=""><td><span class="l">144</span></td><td class="lk">西门子演示<span class="l">DEMO</span>箱二</td><td>[已启用]株洲三菱演示</td><td>[已启用]华辰智通-体验网络</td><td>西门子全系列以太网</td><td>以太网接口</td><td><span class="l">192.168.1.10</span></td><td>默认网关<span class="l">IP</span>为：<span class="l">192.168.1.254</span></td><td class="op"><div class="bg"><span class="bt b1" style="color:#2ea6ea"><svg class="bi" width="18" height="18" viewBox="0 0 18 18" style="left:9px;top:3px"><path d="M4.5 5.5H3.5V13.5H11.5V11" fill="none" stroke="#2ea6ea" stroke-width="1"/><path d="M8.4 11.2L14.3 5.9" fill="none" stroke="#2ea6ea" stroke-width="2.1" stroke-linecap="round"/><path d="M7.6 12.2L8.2 10.4 9.5 11.6Z" fill="#2ea6ea"/></svg><i style="left:27px">编辑</i></span><span class="bt b2"><svg class="bi" width="18" height="18" viewBox="0 0 18 18" style="left:9px;top:3px"><path d="M6.5 4.5H10.5V12.5H3.5V7.5Z M3.5 7.5H6.5V4.5" fill="none" stroke="#333" stroke-width="1"/><path d="M10.5 6.5H14.5V15.5H7.5V9.5Z" fill="#e6e6e6" stroke="#333" stroke-width="1"/><path d="M7.5 9.5H10.5V6.5" fill="none" stroke="#333" stroke-width="1"/></svg><i style="left:27px">禁用</i></span><span class="bt b3"><svg class="bi" width="18" height="18" viewBox="0 0 18 18" style="left:8px;top:3px"><path d="M4 6.5H13" fill="none" stroke="#e2474b" stroke-width="1"/><path d="M6.5 6V5.5H10.5V6" fill="none" stroke="#e2474b" stroke-width="1"/><path d="M5.5 6.5V14.5H11.5V6.5" fill="none" stroke="#e2474b" stroke-width="1"/><path d="M7.5 8V13M9.5 8V13" fill="none" stroke="#e2474b" stroke-width="1"/></svg><i style="left:23px">删除</i></span></div></td></tr>
<tr class="st"><td><span class="l">236</span></td><td class="lk">西门子<span class="l">300PLC</span></td><td>[已启用]株洲三菱演示</td><td>[已启用]华辰智通-体验网络</td><td>西门子全系列以太网</td><td>以太网接口</td><td><span class="l">192.168.1.3</span></td><td>默认网关<span class="l">IP</span>：<span class="l">192.168.1.1</span></td><td class="op"><div class="bg"><span class="bt b1" style="color:#2ea6ea"><svg class="bi" width="18" height="18" viewBox="0 0 18 18" style="left:9px;top:3px"><path d="M4.5 5.5H3.5V13.5H11.5V11" fill="none" stroke="#2ea6ea" stroke-width="1"/><path d="M8.4 11.2L14.3 5.9" fill="none" stroke="#2ea6ea" stroke-width="2.1" stroke-linecap="round"/><path d="M7.6 12.2L8.2 10.4 9.5 11.6Z" fill="#2ea6ea"/></svg><i style="left:27px">编辑</i></span><span class="bt b2"><svg class="bi" width="18" height="18" viewBox="0 0 18 18" style="left:9px;top:3px"><path d="M6.5 4.5H10.5V12.5H3.5V7.5Z M3.5 7.5H6.5V4.5" fill="none" stroke="#333" stroke-width="1"/><path d="M10.5 6.5H14.5V15.5H7.5V9.5Z" fill="#e6e6e6" stroke="#333" stroke-width="1"/><path d="M7.5 9.5H10.5V6.5" fill="none" stroke="#333" stroke-width="1"/></svg><i style="left:27px">禁用</i></span><span class="bt b3"><svg class="bi" width="18" height="18" viewBox="0 0 18 18" style="left:8px;top:3px"><path d="M4 6.5H13" fill="none" stroke="#e2474b" stroke-width="1"/><path d="M6.5 6V5.5H10.5V6" fill="none" stroke="#e2474b" stroke-width="1"/><path d="M5.5 6.5V14.5H11.5V6.5" fill="none" stroke="#e2474b" stroke-width="1"/><path d="M7.5 8V13M9.5 8V13" fill="none" stroke="#e2474b" stroke-width="1"/></svg><i style="left:23px">删除</i></span></div></td></tr>
<tr class=""><td><span class="l">64</span></td><td class="lk">公司服务器</td><td>[已启用]测试架一号</td><td>[已启用]华辰智通-内部网络</td><td>通用以太网设备</td><td>以太网接口</td><td><span class="l">192.168.188.88</span></td><td>公司内部服务器</td><td class="op"><div class="bg"><span class="bt b1" style="color:#2ea6ea"><svg class="bi" width="18" height="18" viewBox="0 0 18 18" style="left:9px;top:3px"><path d="M4.5 5.5H3.5V13.5H11.5V11" fill="none" stroke="#2ea6ea" stroke-width="1"/><path d="M8.4 11.2L14.3 5.9" fill="none" stroke="#2ea6ea" stroke-width="2.1" stroke-linecap="round"/><path d="M7.6 12.2L8.2 10.4 9.5 11.6Z" fill="#2ea6ea"/></svg><i style="left:27px">编辑</i></span><span class="bt b2"><svg class="bi" width="18" height="18" viewBox="0 0 18 18" style="left:9px;top:3px"><path d="M6.5 4.5H10.5V12.5H3.5V7.5Z M3.5 7.5H6.5V4.5" fill="none" stroke="#333" stroke-width="1"/><path d="M10.5 6.5H14.5V15.5H7.5V9.5Z" fill="#e6e6e6" stroke="#333" stroke-width="1"/><path d="M7.5 9.5H10.5V6.5" fill="none" stroke="#333" stroke-width="1"/></svg><i style="left:27px">禁用</i></span><span class="bt b3"><svg class="bi" width="18" height="18" viewBox="0 0 18 18" style="left:8px;top:3px"><path d="M4 6.5H13" fill="none" stroke="#e2474b" stroke-width="1"/><path d="M6.5 6V5.5H10.5V6" fill="none" stroke="#e2474b" stroke-width="1"/><path d="M5.5 6.5V14.5H11.5V6.5" fill="none" stroke="#e2474b" stroke-width="1"/><path d="M7.5 8V13M9.5 8V13" fill="none" stroke="#e2474b" stroke-width="1"/></svg><i style="left:23px">删除</i></span></div></td></tr>
<tr class="st"><td><span class="l">15</span></td><td class="lk">现场<span class="l">PC</span>机</td><td>[已启用]<span class="l">A1</span>栋客户测试网关</td><td>[已启用]华辰智通-测试网络</td><td>通用以太网设备</td><td>以太网接口</td><td><span class="l">192.168.2.13</span></td><td><span class="l">PC</span>连接到模块的<span class="l">LAN</span>口<span class="l">,PC</span>的<span class="l">IP</span>配置成<span class="l">192.168.2.13,</span>网关配置成<span class="l">192.168.2.1</span></td><td class="op"><div class="bg"><span class="bt b1" style="color:#2ea6ea"><svg class="bi" width="18" height="18" viewBox="0 0 18 18" style="left:9px;top:3px"><path d="M4.5 5.5H3.5V13.5H11.5V11" fill="none" stroke="#2ea6ea" stroke-width="1"/><path d="M8.4 11.2L14.3 5.9" fill="none" stroke="#2ea6ea" stroke-width="2.1" stroke-linecap="round"/><path d="M7.6 12.2L8.2 10.4 9.5 11.6Z" fill="#2ea6ea"/></svg><i style="left:27px">编辑</i></span><span class="bt b2"><svg class="bi" width="18" height="18" viewBox="0 0 18 18" style="left:9px;top:3px"><path d="M6.5 4.5H10.5V12.5H3.5V7.5Z M3.5 7.5H6.5V4.5" fill="none" stroke="#333" stroke-width="1"/><path d="M10.5 6.5H14.5V15.5H7.5V9.5Z" fill="#e6e6e6" stroke="#333" stroke-width="1"/><path d="M7.5 9.5H10.5V6.5" fill="none" stroke="#333" stroke-width="1"/></svg><i style="left:27px">禁用</i></span><span class="bt b3"><svg class="bi" width="18" height="18" viewBox="0 0 18 18" style="left:8px;top:3px"><path d="M4 6.5H13" fill="none" stroke="#e2474b" stroke-width="1"/><path d="M6.5 6V5.5H10.5V6" fill="none" stroke="#e2474b" stroke-width="1"/><path d="M5.5 6.5V14.5H11.5V6.5" fill="none" stroke="#e2474b" stroke-width="1"/><path d="M7.5 8V13M9.5 8V13" fill="none" stroke="#e2474b" stroke-width="1"/></svg><i style="left:23px">删除</i></span></div></td></tr>
<tr class="hv"><td><span class="l">368</span></td><td class="lk">华辰智通<span class="l">AC 500PLC001</span></td><td>[已启用]研发网关</td><td>[已启用]华辰智通-测试网络</td><td>通用以太网设备</td><td>以太网接口</td><td><span class="l">192.168.10.2</span></td><td>默认网关<span class="l">IP</span>：<span class="l">192.168.2.254</span></td><td class="op"><div class="bg"><span class="bt b1" style="color:#333"><svg class="bi" width="18" height="18" viewBox="0 0 18 18" style="left:9px;top:3px"><path d="M4.5 5.5H3.5V13.5H11.5V11" fill="none" stroke="#333" stroke-width="1"/><path d="M8.4 11.2L14.3 5.9" fill="none" stroke="#333" stroke-width="2.1" stroke-linecap="round"/><path d="M7.6 12.2L8.2 10.4 9.5 11.6Z" fill="#333"/></svg><i style="left:27px">编辑</i></span><span class="bt b2"><svg class="bi" width="18" height="18" viewBox="0 0 18 18" style="left:9px;top:3px"><path d="M6.5 4.5H10.5V12.5H3.5V7.5Z M3.5 7.5H6.5V4.5" fill="none" stroke="#333" stroke-width="1"/><path d="M10.5 6.5H14.5V15.5H7.5V9.5Z" fill="#e6e6e6" stroke="#333" stroke-width="1"/><path d="M7.5 9.5H10.5V6.5" fill="none" stroke="#333" stroke-width="1"/></svg><i style="left:27px">启用</i></span><span class="bt b3"><svg class="bi" width="18" height="18" viewBox="0 0 18 18" style="left:8px;top:3px"><path d="M4 6.5H13" fill="none" stroke="#e2474b" stroke-width="1"/><path d="M6.5 6V5.5H10.5V6" fill="none" stroke="#e2474b" stroke-width="1"/><path d="M5.5 6.5V14.5H11.5V6.5" fill="none" stroke="#e2474b" stroke-width="1"/><path d="M7.5 8V13M9.5 8V13" fill="none" stroke="#e2474b" stroke-width="1"/></svg><i style="left:23px">删除</i></span></div></td></tr>
<tr class="st"><td><span class="l">13</span></td><td class="lk">仪表二-以太网</td><td>[已启用]<span class="l">A1</span>栋客户测试网关</td><td>[已启用]华辰智通-测试网络</td><td>通用以太网设备</td><td>以太网接口</td><td><span class="l">192.168.2.11</span></td><td>网关<span class="l">192.168.2.1</span></td><td class="op"><div class="bg"><span class="bt b1" style="color:#2ea6ea"><svg class="bi" width="18" height="18" viewBox="0 0 18 18" style="left:9px;top:3px"><path d="M4.5 5.5H3.5V13.5H11.5V11" fill="none" stroke="#2ea6ea" stroke-width="1"/><path d="M8.4 11.2L14.3 5.9" fill="none" stroke="#2ea6ea" stroke-width="2.1" stroke-linecap="round"/><path d="M7.6 12.2L8.2 10.4 9.5 11.6Z" fill="#2ea6ea"/></svg><i style="left:27px">编辑</i></span><span class="bt b2"><svg class="bi" width="18" height="18" viewBox="0 0 18 18" style="left:9px;top:3px"><path d="M6.5 4.5H10.5V12.5H3.5V7.5Z M3.5 7.5H6.5V4.5" fill="none" stroke="#333" stroke-width="1"/><path d="M10.5 6.5H14.5V15.5H7.5V9.5Z" fill="#e6e6e6" stroke="#333" stroke-width="1"/><path d="M7.5 9.5H10.5V6.5" fill="none" stroke="#333" stroke-width="1"/></svg><i style="left:27px">禁用</i></span><span class="bt b3"><svg class="bi" width="18" height="18" viewBox="0 0 18 18" style="left:8px;top:3px"><path d="M4 6.5H13" fill="none" stroke="#e2474b" stroke-width="1"/><path d="M6.5 6V5.5H10.5V6" fill="none" stroke="#e2474b" stroke-width="1"/><path d="M5.5 6.5V14.5H11.5V6.5" fill="none" stroke="#e2474b" stroke-width="1"/><path d="M7.5 8V13M9.5 8V13" fill="none" stroke="#e2474b" stroke-width="1"/></svg><i style="left:23px">删除</i></span></div></td></tr>
<tr class=""><td><span class="l">11</span></td><td class="lk">智能仪表-串口</td><td>[已启用]<span class="l">A1</span>栋客户测试网关</td><td>[已启用]华辰智通-测试网络</td><td>通用串口设备</td><td>串行接口</td><td><span class="l">1989</span></td><td><span class="l">A1</span>栋客户测试,智能仪表<span class="l">,485</span>串口,数据为透传</td><td class="op"><div class="bg"><span class="bt b1" style="color:#2ea6ea"><svg class="bi" width="18" height="18" viewBox="0 0 18 18" style="left:9px;top:3px"><path d="M4.5 5.5H3.5V13.5H11.5V11" fill="none" stroke="#2ea6ea" stroke-width="1"/><path d="M8.4 11.2L14.3 5.9" fill="none" stroke="#2ea6ea" stroke-width="2.1" stroke-linecap="round"/><path d="M7.6 12.2L8.2 10.4 9.5 11.6Z" fill="#2ea6ea"/></svg><i style="left:27px">编辑</i></span><span class="bt b2"><svg class="bi" width="18" height="18" viewBox="0 0 18 18" style="left:9px;top:3px"><path d="M6.5 4.5H10.5V12.5H3.5V7.5Z M3.5 7.5H6.5V4.5" fill="none" stroke="#333" stroke-width="1"/><path d="M10.5 6.5H14.5V15.5H7.5V9.5Z" fill="#e6e6e6" stroke="#333" stroke-width="1"/><path d="M7.5 9.5H10.5V6.5" fill="none" stroke="#333" stroke-width="1"/></svg><i style="left:27px">禁用</i></span><span class="bt b3"><svg class="bi" width="18" height="18" viewBox="0 0 18 18" style="left:8px;top:3px"><path d="M4 6.5H13" fill="none" stroke="#e2474b" stroke-width="1"/><path d="M6.5 6V5.5H10.5V6" fill="none" stroke="#e2474b" stroke-width="1"/><path d="M5.5 6.5V14.5H11.5V6.5" fill="none" stroke="#e2474b" stroke-width="1"/><path d="M7.5 8V13M9.5 8V13" fill="none" stroke="#e2474b" stroke-width="1"/></svg><i style="left:23px">删除</i></span></div></td></tr>
<tr class="st"><td><span class="l">237</span></td><td class="lk">台达<span class="l">PLC</span></td><td>[已启用]研发网关</td><td>[已启用]华辰智通-测试网络</td><td>台达<span class="l">DVP</span>系列编程口</td><td>串行接口</td><td><span class="l">1989</span></td><td>默认网关<span class="l">IP</span>：<span class="l">192.168.1.1</span></td><td class="op"><div class="bg"><span class="bt b1" style="color:#2ea6ea"><svg class="bi" width="18" height="18" viewBox="0 0 18 18" style="left:9px;top:3px"><path d="M4.5 5.5H3.5V13.5H11.5V11" fill="none" stroke="#2ea6ea" stroke-width="1"/><path d="M8.4 11.2L14.3 5.9" fill="none" stroke="#2ea6ea" stroke-width="2.1" stroke-linecap="round"/><path d="M7.6 12.2L8.2 10.4 9.5 11.6Z" fill="#2ea6ea"/></svg><i style="left:27px">编辑</i></span><span class="bt b2"><svg class="bi" width="18" height="18" viewBox="0 0 18 18" style="left:9px;top:3px"><path d="M6.5 4.5H10.5V12.5H3.5V7.5Z M3.5 7.5H6.5V4.5" fill="none" stroke="#333" stroke-width="1"/><path d="M10.5 6.5H14.5V15.5H7.5V9.5Z" fill="#e6e6e6" stroke="#333" stroke-width="1"/><path d="M7.5 9.5H10.5V6.5" fill="none" stroke="#333" stroke-width="1"/></svg><i style="left:27px">禁用</i></span><span class="bt b3"><svg class="bi" width="18" height="18" viewBox="0 0 18 18" style="left:8px;top:3px"><path d="M4 6.5H13" fill="none" stroke="#e2474b" stroke-width="1"/><path d="M6.5 6V5.5H10.5V6" fill="none" stroke="#e2474b" stroke-width="1"/><path d="M5.5 6.5V14.5H11.5V6.5" fill="none" stroke="#e2474b" stroke-width="1"/><path d="M7.5 8V13M9.5 8V13" fill="none" stroke="#e2474b" stroke-width="1"/></svg><i style="left:23px">删除</i></span></div></td></tr>
<tr class=""><td><span class="l">238</span></td><td class="lk">台达<span class="l">PLC2</span></td><td>[已启用]研发网关</td><td>[已启用]华辰智通-测试网络</td><td>台达<span class="l">DVP</span>系列编程口</td><td>串行接口</td><td><span class="l">1989</span></td><td></td><td class="op"><div class="bg"><span class="bt b1" style="color:#2ea6ea"><svg class="bi" width="18" height="18" viewBox="0 0 18 18" style="left:9px;top:3px"><path d="M4.5 5.5H3.5V13.5H11.5V11" fill="none" stroke="#2ea6ea" stroke-width="1"/><path d="M8.4 11.2L14.3 5.9" fill="none" stroke="#2ea6ea" stroke-width="2.1" stroke-linecap="round"/><path d="M7.6 12.2L8.2 10.4 9.5 11.6Z" fill="#2ea6ea"/></svg><i style="left:27px">编辑</i></span><span class="bt b2"><svg class="bi" width="18" height="18" viewBox="0 0 18 18" style="left:9px;top:3px"><path d="M6.5 4.5H10.5V12.5H3.5V7.5Z M3.5 7.5H6.5V4.5" fill="none" stroke="#333" stroke-width="1"/><path d="M10.5 6.5H14.5V15.5H7.5V9.5Z" fill="#e6e6e6" stroke="#333" stroke-width="1"/><path d="M7.5 9.5H10.5V6.5" fill="none" stroke="#333" stroke-width="1"/></svg><i style="left:27px">禁用</i></span><span class="bt b3"><svg class="bi" width="18" height="18" viewBox="0 0 18 18" style="left:8px;top:3px"><path d="M4 6.5H13" fill="none" stroke="#e2474b" stroke-width="1"/><path d="M6.5 6V5.5H10.5V6" fill="none" stroke="#e2474b" stroke-width="1"/><path d="M5.5 6.5V14.5H11.5V6.5" fill="none" stroke="#e2474b" stroke-width="1"/><path d="M7.5 8V13M9.5 8V13" fill="none" stroke="#e2474b" stroke-width="1"/></svg><i style="left:23px">删除</i></span></div></td></tr>
</tbody></table>
<div id="redbox"></div>
<div id="redbox2"></div>
<div id="scroll"></div>
<div id="thumb"></div>
<div id="status"></div>
<div style="position:absolute;left:1626px;top:920px;height:8px;overflow:hidden;font-size:13px;line-height:16px;color:#111;white-space:nowrap;width:260px">
<svg width="14" height="10" viewBox="0 0 14 10" style="position:absolute;left:0;top:1px"><path d="M1 9L7 3l5-2-2 5-6 6" fill="none" stroke="#888" stroke-width="1.1"/></svg>
<span style="position:absolute;left:19px;top:1px">加速器</span>
<svg width="10" height="10" viewBox="0 0 10 10" style="position:absolute;left:65px;top:1px"><path d="M5 0.5L1 5h2.5v5h3V5H9z" fill="none" stroke="#888" stroke-width="1"/></svg>
<span style="position:absolute;left:84px;top:1px">下载</span>
<span style="position:absolute;left:131px;top:0;width:3px;height:8px;border-left:1px dotted #999"></span>
</div>
<div style="position:absolute;left:1760px;top:918px;width:142px;height:10px;overflow:hidden">
<svg width="142" height="10" viewBox="0 0 142 10" style="position:absolute;left:0;top:0"><path d="M6.5 10V5.5H21.5V10M11.5 5.5V3.5H16.5V5.5" fill="none" stroke="#9a9a9a" stroke-width="1.2"/><path d="M41 10V7H37L41.5 2.5 46 7H42V10" fill="none" stroke="#9a9a9a" stroke-width="1.2"/><path d="M61 10V7.5H64L69 3.5V10" fill="none" stroke="#8a8a8a" stroke-width="1.2"/><path d="M72 5.5Q74 7.5 73 10" fill="none" stroke="#8a8a8a" stroke-width="1"/><path d="M88.5 10V4.5H101.5V10" fill="none" stroke="#9a9a9a" stroke-width="1.2"/><circle cx="121" cy="10" r="5.5" fill="none" stroke="#9a9a9a" stroke-width="1.2"/><circle cx="121" cy="9.5" r="1.6" fill="none" stroke="#9a9a9a" stroke-width="1"/></svg></div>
<div id="net">
<svg width="130" height="70" viewBox="0 0 130 70" style="position:absolute;left:1740px;top:865px"><defs><mask id="pm"><rect x="0" y="0" width="130" height="70" fill="#fff"/><circle cx="96.4" cy="36.7" r="29.5" fill="#000"/></mask></defs><rect x="7" y="16" width="90" height="42" rx="21" fill="rgba(100,102,108,0.6)" mask="url(#pm)"/><circle cx="96.4" cy="36.7" r="29.5" fill="rgba(125,128,138,0.6)" stroke="rgba(90,90,95,0.25)" stroke-width="1"/></svg>
<svg width="60" height="60" viewBox="0 0 60 60" style="position:absolute;left:1806px;top:872px;overflow:visible"><defs><linearGradient id="ag" x1="0" y1="0" x2="0" y2="1"><stop offset="0" stop-color="#7fe0e0"/><stop offset="1" stop-color="#cfe89a"/></linearGradient></defs><path d="M30.2 4.6A25.2 25.2 0 0 1 30.2 55" fill="none" stroke="url(#ag)" stroke-width="1.5"/></svg>
<svg width="50" height="30" viewBox="0 0 50 30" style="position:absolute;left:1815px;top:886px"><path d="M12.5 6.2L4.6 18.7H16.5M12.5 6.2V24" fill="none" stroke="#fff" stroke-width="1.25"/><path d="M29.6 11.6A5.3 5.4 0 1 1 29.6 11.4C29.8 18 28 24 22.5 23.6" fill="none" stroke="#fff" stroke-width="1.25"/><path d="M32.3 23.6L38.6 17.4" stroke="#fff" stroke-width="0.9"/><circle cx="33.4" cy="18.3" r="1.1" fill="none" stroke="#fff" stroke-width="0.8"/><circle cx="37.6" cy="22.7" r="1.1" fill="none" stroke="#fff" stroke-width="0.8"/></svg>
<svg width="8" height="8" viewBox="0 0 8 8" style="position:absolute;left:1758px;top:887px"><path d="M3.5 7.5V1.5M0.8 4.2l2.7-2.7 2.7 2.7" fill="none" stroke="#9fd6f5" stroke-width="1.3"/></svg>
<svg width="8" height="8" viewBox="0 0 8 8" style="position:absolute;left:1758px;top:908px"><path d="M3.5 0.5V6.5M0.8 3.8l2.7 2.7 2.7-2.7" fill="none" stroke="#8fe08f" stroke-width="1.3"/></svg>
<div style="position:absolute;left:1771px;top:885px;font-size:11px;line-height:14px;color:#fff;white-space:nowrap">1.9<span style="font-size:9px;color:#d0d0d0;margin-left:1px">K/s</span></div>
<div style="position:absolute;left:1771px;top:906px;font-size:11px;line-height:14px;color:#fff;white-space:nowrap">4.5<span style="font-size:9px;color:#d0d0d0;margin-left:1px">K/s</span></div>
</div>
</body></html>
